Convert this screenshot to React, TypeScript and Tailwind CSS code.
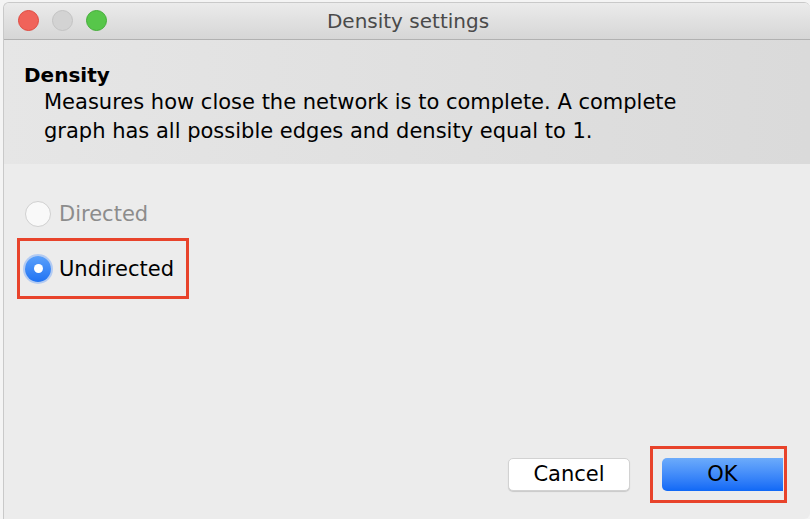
import React, { useState } from 'react';

const font = { fontFamily: '"DejaVu Sans", "Noto Sans", sans-serif' };

const Radio = ({ checked, disabled, label, onClick }: { checked: boolean; disabled?: boolean; label: string; onClick?: () => void }) => (
  <button onClick={onClick} disabled={disabled} className="flex items-center gap-[8px] text-left">
    {checked ? (
      <span className="w-[26px] h-[26px] rounded-full bg-gradient-to-b from-[#5aa0fb] to-[#1f72f2] shadow-[0_0_0_2px_rgba(110,165,250,0.45)] flex items-center justify-center">
        <span className="w-[9px] h-[9px] rounded-full bg-white" />
      </span>
    ) : (
      <span className="w-[26px] h-[26px] rounded-full bg-[#f9f9f9] border border-[#d0d0d0]" />
    )}
    <span className={`text-[21px] leading-[26px] ${disabled ? 'text-[#8c8c8c]' : 'text-black'}`}>{label}</span>
  </button>
);

const App = () => {
  const [mode, setMode] = useState('undirected');

  return (
    <div style={font} className="w-[810px] h-[519px] bg-[#f4f4f4] overflow-hidden pl-[3px] pt-[2px]">
      <div className="w-[807px] h-[517px] rounded-t-[6px] rounded-br-[6px] border-l border-t border-[#c9c9c9] bg-[#ececec] flex flex-col overflow-hidden">
        {/* TITLE BAR */}
        <div className="h-[37px] shrink-0 relative flex items-center justify-center bg-gradient-to-b from-[#ebebeb] to-[#d6d6d6] border-b border-[#b1b1b1]">
          <div className="absolute left-[14px] top-[7px] flex gap-[13px]">
            <span className="w-[21px] h-[21px] rounded-full bg-[#f0635a] border border-[#e0493f]" />
            <span className="w-[21px] h-[21px] rounded-full bg-[#d3d3d3] border border-[#c3c3c3]" />
            <span className="w-[21px] h-[21px] rounded-full bg-[#57c64a] border border-[#44ad39]" />
          </div>
          <span className="text-[20px] text-[#4a4a4a] pl-[2px]">Density settings</span>
        </div>

        {/* HEADER */}
        <div className="h-[124px] shrink-0 bg-gradient-to-r from-[#e6e6e6] to-[#dadada] pt-[22px] pl-[20px]">
          <div className="text-[20px] font-bold text-black leading-[26px]">Density</div>
          <p className="text-[21px] text-black leading-[29px] pl-[20px]">
            Measures how close the network is to complete. A complete
            <br />
            graph has all possible edges and density equal to 1.
          </p>
        </div>

        {/* BODY */}
        <div className="flex-1 flex flex-col justify-between pt-[37px] pb-[16px]">
          <div className="flex flex-col pl-[21px] gap-[11px]">
            <Radio checked={false} disabled label="Directed" />
            <div className="-ml-[8px] w-[172px] h-[61px] border-[3px] border-[#e8432b] flex items-center pl-[5px]">
              <Radio checked={mode === 'undirected'} label="Undirected" onClick={() => setMode('undirected')} />
            </div>
          </div>

          <div className="flex justify-end items-center gap-[20px] pr-[23px]">
            <button className="w-[122px] h-[33px] rounded-[5px] bg-white border border-[#d2d2d2] shadow-[0_1px_1px_rgba(0,0,0,0.15)] text-[21px] text-black">
              Cancel
            </button>
            <div className="w-[137px] h-[57px] border-[3px] border-[#e8432b] flex items-center pl-[9px]">
              <button className="w-[121px] h-[33px] rounded-l-[5px] bg-gradient-to-b from-[#6cabfb] to-[#0f68f6] text-[21px] text-black">
                OK
              </button>
            </div>
          </div>
        </div>
      </div>
    </div>
  );
};

export default App;
